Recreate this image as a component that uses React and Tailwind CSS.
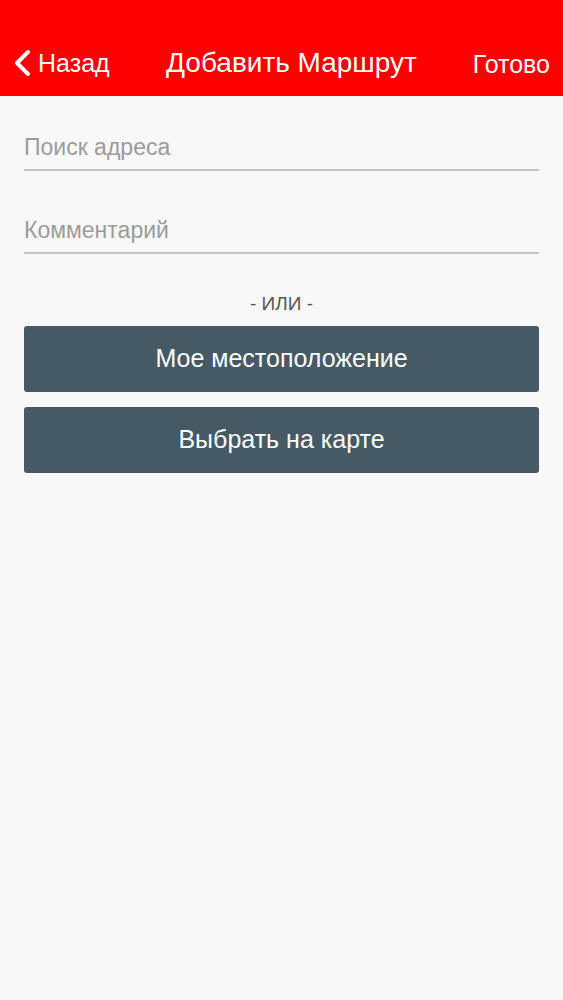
import React from "react";

export default function App() {
  return (
    <div className="min-h-[1000px] w-full bg-[#f8f8f8]" style={{ fontFamily: '"Liberation Sans", Arial, sans-serif' }}>
      <div className="flex h-[96px] items-end bg-[#ff0000] pb-[19px] text-white">
        <div className="flex w-[160px] items-center pl-[13px]">
          <svg width="18" height="28" viewBox="0 0 18 28" className="mr-[7px]">
            <path d="M15 3 L4 14 L15 25" fill="none" stroke="white" strokeWidth="4" strokeLinecap="round" strokeLinejoin="round" />
          </svg>
          <span className="text-[25px] leading-none">Назад</span>
        </div>
        <div className="flex-1 whitespace-nowrap text-center text-[28px] leading-none">Добавить Маршрут</div>
        <div className="w-[140px] pr-[13px] text-right text-[25px] leading-none">Готово</div>
      </div>
      <div className="px-[24px] pt-[36px]">
        <div className="border-b-2 border-[#c4c4c4] pb-[7px] text-[23px] leading-[30px] text-[#9c9c9c]">Поиск адреса</div>
        <div className="mt-[44px] border-b-2 border-[#c4c4c4] pb-[7px] text-[23px] leading-[30px] text-[#9c9c9c]">Комментарий</div>
        <div className="mt-[38px] text-center text-[19px] leading-[24px] text-[#555]">- ИЛИ -</div>
        <div className="mt-[10px] flex h-[66px] items-center justify-center rounded-[3px] bg-[#455a64] text-[25px] text-white">Мое местоположение</div>
        <div className="mt-[15px] flex h-[66px] items-center justify-center rounded-[3px] bg-[#455a64] text-[25px] text-white">Выбрать на карте</div>
      </div>
    </div>
  );
}
